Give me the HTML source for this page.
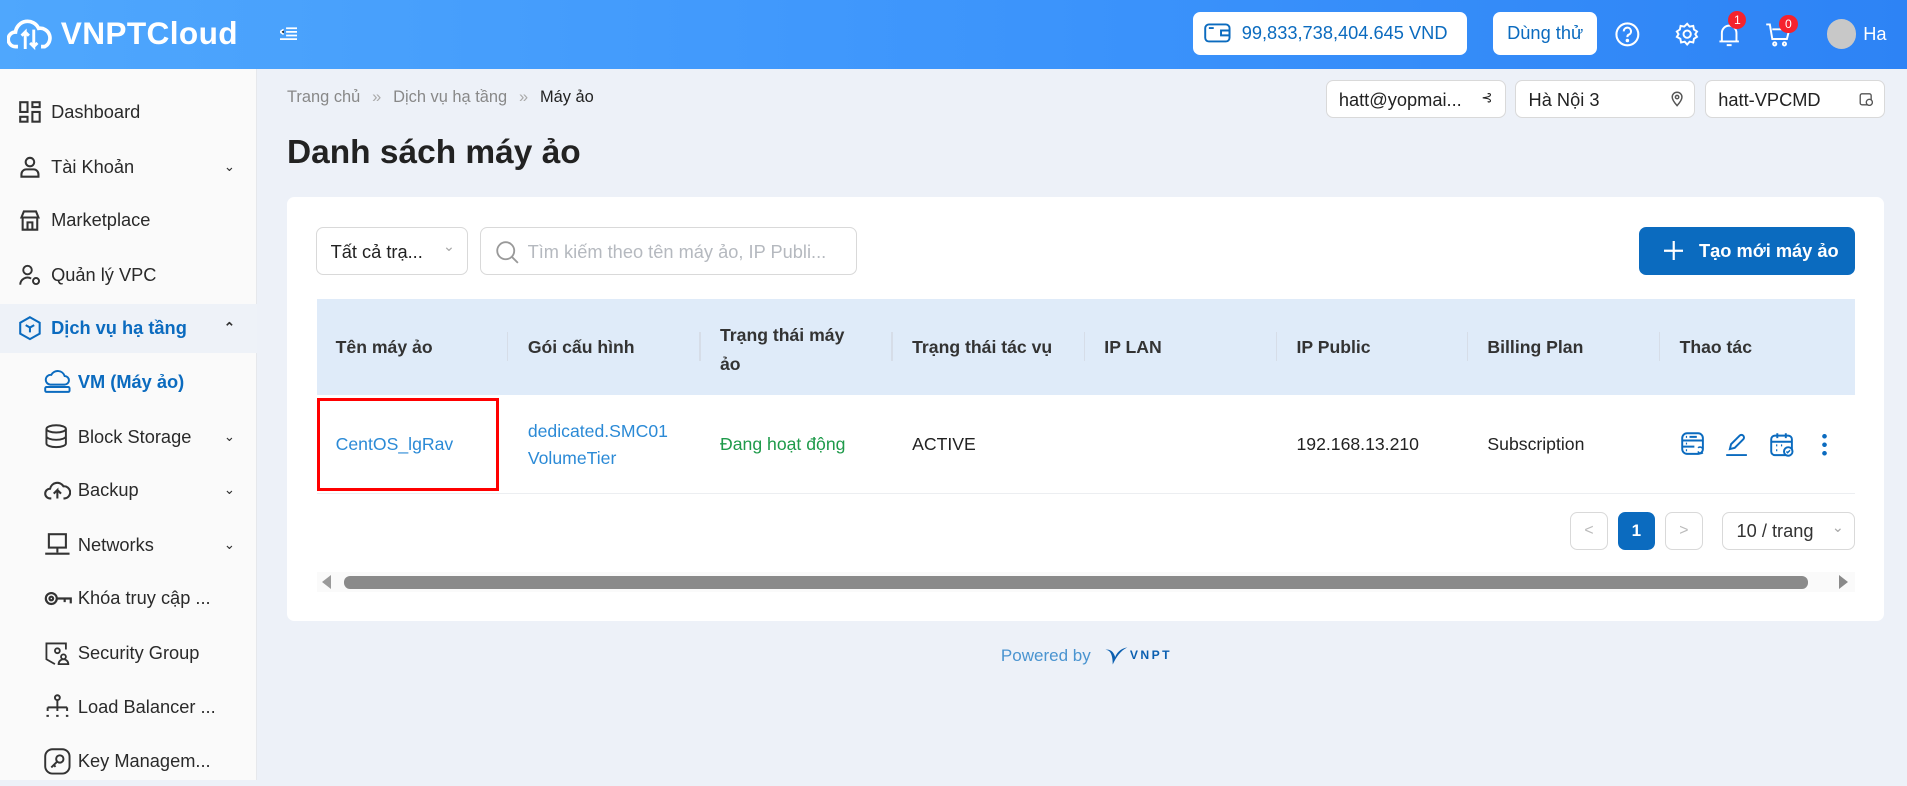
<!DOCTYPE html>
<html><head><meta charset="utf-8">
<style>
html{zoom:1.2162}
*{box-sizing:border-box;margin:0;padding:0}
body{width:1568px;height:641px;overflow:hidden;font-family:"Liberation Sans","Noto Sans CJK SC",sans-serif;background:#edf1f8;position:relative;color:#222}
.hdr{position:absolute;left:0;top:0;width:1568px;height:57px;background:linear-gradient(90deg,#4fa7fd,#3a92fb 60%,#2d83f5)}
.logo{position:absolute;left:6px;top:12px;color:#fff;font-size:26px;font-weight:bold;display:flex;align-items:center;gap:6px;letter-spacing:.3px}
.side{position:absolute;left:0;top:57px;width:211px;height:584px;background:#fafafa;border-right:1px solid #e6e8ec}
.it{position:absolute;left:0;width:211px;height:40px;display:flex;align-items:center;font-size:15px;color:#2a2a2a}
.it svg{position:absolute}
.it .t{position:absolute}
.chev{position:absolute;left:184px;font-size:11px;color:#333}
.abs{position:absolute}
.box{position:absolute;background:#fff;border:1px solid #d9d9d9;border-radius:6px}
.th{position:absolute;top:246px;font-size:14.5px;font-weight:bold;color:#333}
.sep{position:absolute;top:273px;width:1px;height:24px;background:#d6dde8}
.td{position:absolute;font-size:14.5px}
</style></head><body>
<div class="hdr">
 <div class="logo"><svg width="38" height="30" viewBox="0 0 38 30" fill="none" stroke="#fff" stroke-width="3"><path d="M9 26H7a6 6 0 0 1 0-12 10 10 0 0 1 19-3 8 8 0 0 1 5 15h-3"/><path d="M15 28V14l-3 3M15 14l3 3M22 12v14l-3-3M22 26l3-3" stroke-width="2.4"/></svg>VNPTCloud</div>
 <svg class="abs" style="left:230px;top:22px" width="14" height="12" stroke="#fff" stroke-width="1.4"><path d="M5 1h9M5 4h9M5 7h9M0 10h14M3 2L0 4l3 2"/></svg>
 <div class="abs" style="left:981px;top:10px;width:225px;height:35px;background:#fff;border-radius:6px;color:#0b6bbf;font-size:15px;display:flex;align-items:center;padding-left:9px;gap:9px;white-space:nowrap"><svg width="22" height="18" fill="none" stroke="#0b6bbf" stroke-width="1.6"><rect x="1" y="2" width="20" height="14" rx="3"/><path d="M4 5h4M14 7h7v4h-7z"/></svg>99,833,738,404.645 VND</div>
 <div class="abs" style="left:1228px;top:10px;width:85px;height:35px;background:#fff;border-radius:6px;color:#0b6bbf;font-size:15px;text-align:center;line-height:35px">Dùng thử</div>
 <svg class="abs" style="left:1327px;top:17px" width="22" height="22" fill="none" stroke="#fff" stroke-width="1.7"><circle cx="11" cy="11" r="9"/><path d="M8 8.5a3 3 0 1 1 4 2.8c-1 .4-1 1-1 2"/><circle cx="11" cy="16" r=".6" fill="#fff"/></svg>
 <svg class="abs" style="left:1377px;top:18px" width="20" height="20" fill="none" stroke="#fff" stroke-width="1.6"><circle cx="10" cy="10" r="3"/><path d="M10 1.5l2 2.3 3-.6.6 3 2.5 1.6-1.4 2.2 1.4 2.2-2.5 1.6-.6 3-3-.6-2 2.3-2-2.3-3 .6-.6-3L1.5 12.2 2.9 10 1.5 7.8 4 6.2l.6-3 3 .6z"/></svg>
 <svg class="abs" style="left:1412px;top:18px" width="20" height="22" fill="none" stroke="#fff" stroke-width="1.6"><path d="M4 16V9a6 6 0 0 1 12 0v7M2 16h16M8 19h4"/></svg>
 <div class="abs" style="left:1421px;top:9px;width:15px;height:15px;border-radius:50%;background:#f5222d;color:#fff;font-size:10px;text-align:center;line-height:15px">1</div>
 <svg class="abs" style="left:1451px;top:18px" width="22" height="22" fill="none" stroke="#fff" stroke-width="1.6"><path d="M1 2h3l2 12h12l2-8H6"/><circle cx="8" cy="18" r="1.3"/><circle cx="16" cy="18" r="1.3"/></svg>
 <div class="abs" style="left:1463px;top:12px;width:15px;height:15px;border-radius:50%;background:#f5222d;color:#fff;font-size:10px;text-align:center;line-height:15px">0</div>
 <div class="abs" style="left:1502px;top:16px;width:24px;height:24px;border-radius:50%;background:#c8c8c8"></div>
 <div class="abs" style="left:1532px;top:19px;color:#fff;font-size:15px">Ha</div>
</div>

<div class="side">
 <div class="it" style="top:15px"><svg style="left:16px" width="18" height="18" fill="none" stroke="#333" stroke-width="1.7"><rect x="1" y="1" width="6" height="8"/><rect x="11" y="1" width="6" height="4"/><rect x="1" y="13" width="6" height="4"/><rect x="11" y="9" width="6" height="8"/></svg><span class="t" style="left:42px">Dashboard</span></div>
 <div class="it" style="top:60px"><svg style="left:16px" width="18" height="18" fill="none" stroke="#333" stroke-width="1.7"><circle cx="9" cy="5" r="3.5"/><path d="M2 17v-2a4 4 0 0 1 4-4h6a4 4 0 0 1 4 4v2z"/></svg><span class="t" style="left:42px">Tài Khoản</span><span class="chev">&#8964;</span></div>
 <div class="it" style="top:104px"><svg style="left:16px" width="18" height="18" fill="none" stroke="#333" stroke-width="1.7"><path d="M2 7l2-5h10l2 5zM3 7v10h12V7M7 11h4v6H7z"/></svg><span class="t" style="left:42px">Marketplace</span></div>
 <div class="it" style="top:149px"><svg style="left:16px" width="18" height="18" fill="none" stroke="#333" stroke-width="1.6"><circle cx="7" cy="5" r="3.5"/><path d="M1 17a6 6 0 0 1 9-5"/><circle cx="14" cy="14" r="2.5"/></svg><span class="t" style="left:42px">Quản lý VPC</span></div>
 <div class="it" style="top:193px;background:#eef2f8;color:#0b6bbf;font-weight:bold"><svg style="left:16px" width="18" height="20" fill="none" stroke="#0b6bbf" stroke-width="1.7"><path d="M9 1l8 4.5v9L9 19l-8-4.5v-9z"/><path d="M5.5 7.5L9 9.5l3.5-2M9 9.5v4"/></svg><span class="t" style="left:42px">Dịch vụ hạ tầng</span><span class="chev" style="color:#333">&#8963;</span></div>
 <div class="it" style="top:237px;color:#0b6bbf;font-weight:bold"><svg style="left:36px" width="22" height="20" fill="none" stroke="#0b6bbf" stroke-width="1.6"><path d="M5 12a4 4 0 0 1 1-8 6 6 0 0 1 11 1 3.5 3.5 0 0 1 0 7z"/><rect x="1" y="14" width="20" height="4" rx="1"/></svg><span class="t" style="left:64px">VM (Máy ảo)</span></div>
 <div class="it" style="top:282px"><svg style="left:36px" width="20" height="20" fill="none" stroke="#333" stroke-width="1.6"><ellipse cx="10" cy="4" rx="8" ry="3"/><path d="M2 4v12c0 1.7 3.6 3 8 3s8-1.3 8-3V4M2 10c0 1.7 3.6 3 8 3s8-1.3 8-3"/></svg><span class="t" style="left:64px">Block Storage</span><span class="chev">&#8964;</span></div>
 <div class="it" style="top:326px"><svg style="left:36px" width="22" height="18" fill="none" stroke="#333" stroke-width="1.7"><path d="M6 16H5a4 4 0 0 1 0-8 6 6 0 0 1 11-2 4 4 0 0 1 1 10h-1M11 16V9l-3 3M11 9l3 3"/></svg><span class="t" style="left:64px">Backup</span><span class="chev">&#8964;</span></div>
 <div class="it" style="top:371px"><svg style="left:36px" width="22" height="20" fill="none" stroke="#333" stroke-width="1.7"><rect x="4" y="1" width="14" height="11"/><path d="M11 12v4M1 17h20"/></svg><span class="t" style="left:64px">Networks</span><span class="chev">&#8964;</span></div>
 <div class="it" style="top:415px"><svg style="left:36px" width="24" height="14" fill="none" stroke="#333" stroke-width="1.8"><circle cx="6" cy="7" r="4.5"/><circle cx="6" cy="7" r="1.5"/><path d="M10 7h12v4M17 7v3"/></svg><span class="t" style="left:64px">Khóa truy cập ...</span></div>
 <div class="it" style="top:460px"><svg style="left:36px" width="22" height="20" fill="none" stroke="#333" stroke-width="1.5"><path d="M9 19l-7-4V2h16v5"/><circle cx="11" cy="8" r="2"/><circle cx="16" cy="13" r="2"/><path d="M12 19a4 4 0 0 1 8 0z"/></svg><span class="t" style="left:64px">Security Group</span></div>
 <div class="it" style="top:504px"><svg style="left:36px" width="22" height="20" fill="none" stroke="#333" stroke-width="1.6"><circle cx="11" cy="3" r="2"/><path d="M11 5v6M3 11h16M3 11v3M11 11v3M19 11v3M2 18h2M10 18h2M18 18h2"/></svg><span class="t" style="left:64px">Load Balancer ...</span></div>
 <div class="it" style="top:549px"><svg style="left:36px" width="22" height="22" fill="none" stroke="#333" stroke-width="1.6"><rect x="1" y="1" width="20" height="20" rx="6"/><circle cx="13" cy="9" r="3"/><path d="M11 11l-5 5M8 14l1.5 1.5"/></svg><span class="t" style="left:64px">Key Managem...</span></div>
</div>

<div class="abs" style="left:236px;top:72px;font-size:13.5px;color:#888">Trang chủ <span style="margin:0 6px;color:#aaa">»</span> Dịch vụ hạ tầng <span style="margin:0 6px;color:#aaa">»</span> <span style="color:#222">Máy ảo</span></div>
<div class="box" style="left:1090px;top:66px;width:148px;height:31px;font-size:15px;padding:6px 10px">hatt@yopmai...<span class="abs" style="right:10px;top:7px;font-size:11px">⊰</span></div>
<div class="box" style="left:1246px;top:66px;width:148px;height:31px;font-size:15px;padding:6px 10px">Hà Nội 3<svg class="abs" style="right:9px;top:8px" width="10" height="13" fill="none" stroke="#555" stroke-width="1.2"><path d="M5 12S1 7.5 1 5a4 4 0 0 1 8 0c0 2.5-4 7-4 7z"/><circle cx="5" cy="5" r="1.4"/></svg></div>
<div class="box" style="left:1402px;top:66px;width:148px;height:31px;font-size:15px;padding:6px 10px">hatt-VPCMD<svg class="abs" style="right:9px;top:9px" width="12" height="12" fill="none" stroke="#555" stroke-width="1.1"><rect x="1" y="1.5" width="9" height="9" rx="1.5"/><circle cx="8.5" cy="8.5" r="2.5" fill="#fff"/></svg></div>
<div class="abs" style="left:236px;top:110px;font-size:27.5px;font-weight:bold;color:#222">Danh sách máy ảo</div>

<div class="abs" style="left:236px;top:162px;width:1313px;height:349px;background:#fff;border-radius:6px"></div>
<div class="box" style="left:260px;top:187px;width:125px;height:39px;font-size:15px;padding:10px 11px">Tất cả trạ...<span class="abs" style="right:10px;top:8px;color:#aaa;font-size:12px">&#8964;</span></div>
<div class="box" style="left:395px;top:187px;width:310px;height:39px;font-size:15px;padding:10px 0 0 38px;color:#b5b9bf">Tìm kiếm theo tên máy ảo, IP Publi...<svg class="abs" style="left:12px;top:10px" width="20" height="20" fill="none" stroke="#999" stroke-width="1.5"><circle cx="8" cy="8" r="7"/><path d="M13 13l5 5"/></svg></div>
<div class="abs" style="left:1348px;top:187px;width:177px;height:39px;background:#0b6bbf;border-radius:6px;color:#fff;font-size:15px;font-weight:bold;line-height:39px;padding-left:49px">Tạo mới máy ảo<svg class="abs" style="left:20px;top:11px" width="16" height="16" stroke="#fff" stroke-width="1.8"><path d="M8 0v16M0 8h16"/></svg></div>

<div class="abs" style="left:261px;top:246px;width:1264px;height:79px;background:#dfebf9"></div>
<div class="th" style="left:276px;top:277px">Tên máy ảo</div><div class="sep" style="left:417px"></div>
<div class="th" style="left:434px;top:277px">Gói cấu hình</div><div class="sep" style="left:575px"></div>
<div class="th" style="left:592px;top:264px;line-height:24px">Trạng thái máy<br>ảo</div><div class="sep" style="left:733px"></div>
<div class="th" style="left:750px;top:277px">Trạng thái tác vụ</div><div class="sep" style="left:891px"></div>
<div class="th" style="left:908px;top:277px">IP LAN</div><div class="sep" style="left:1049px"></div>
<div class="th" style="left:1066px;top:277px">IP Public</div><div class="sep" style="left:1206px"></div>
<div class="th" style="left:1223px;top:277px">Billing Plan</div><div class="sep" style="left:1364px"></div>
<div class="th" style="left:1381px;top:277px">Thao tác</div>
<div class="abs" style="left:261px;top:405px;width:1264px;height:1px;background:#eceef1"></div>
<div class="abs" style="left:261px;top:327px;width:149px;height:77px;border:3px solid #f00"></div>
<div class="td" style="left:276px;top:357px;color:#2b8ad6">CentOS_lgRav</div>
<div class="td" style="left:434px;top:344px;color:#2b8ad6;line-height:22px">dedicated.SMC01<br>VolumeTier</div>
<div class="td" style="left:592px;top:357px;color:#1e9a4a">Đang hoạt động</div>
<div class="td" style="left:750px;top:357px">ACTIVE</div>
<div class="td" style="left:1066px;top:357px">192.168.13.210</div>
<div class="td" style="left:1223px;top:357px">Subscription</div>
<svg class="abs" style="left:1382px;top:355px" width="20" height="20" fill="none" stroke="#0b6bbf" stroke-width="1.6"><rect x="1" y="1" width="17" height="17" rx="4"/><path d="M1 7h17M1 12h10M4 4h1M7 4h6M4 9.5h1M4 15h1"/><path d="M14 13a2.5 2.5 0 0 1 4 1M18 17a2.5 2.5 0 0 1-4-1" stroke-width="1.3"/></svg>
<svg class="abs" style="left:1418px;top:355px" width="20" height="20" fill="none" stroke="#0b6bbf" stroke-width="1.6"><path d="M4 14l1-4 7-7a2 2 0 0 1 3 3l-7 7zM1 19h17"/></svg>
<svg class="abs" style="left:1455px;top:355px" width="20" height="21" fill="none" stroke="#0b6bbf" stroke-width="1.6"><rect x="1" y="3" width="17" height="16" rx="3"/><path d="M1 8h17M6 1v4M13 1v4M5 11h1M9 11h1M5 15h1"/><circle cx="15" cy="16" r="3.5" fill="#fff"/><path d="M13.5 16l1 1 2-2" stroke-width="1.2"/></svg>
<div class="abs" style="left:1498px;top:355px;width:4px;height:20px;background:radial-gradient(circle,#0b6bbf 1.7px,transparent 2px) 0 0/4px 7px"></div>

<div class="box" style="left:1291px;top:421px;width:31px;height:31px;color:#bbb;text-align:center;line-height:29px;font-size:13px">&lt;</div>
<div class="abs" style="left:1330px;top:421px;width:31px;height:31px;background:#0b6bbf;border-radius:6px;color:#fff;text-align:center;line-height:31px;font-size:14px;font-weight:bold">1</div>
<div class="box" style="left:1369px;top:421px;width:31px;height:31px;color:#bbb;text-align:center;line-height:29px;font-size:13px">&gt;</div>
<div class="box" style="left:1416px;top:421px;width:109px;height:31px;font-size:15px;padding:6px 11px;color:#333">10 / trang<span class="abs" style="right:8px;top:5px;color:#aaa;font-size:12px">&#8964;</span></div>

<div class="abs" style="left:261px;top:470px;width:1264px;height:17px;background:#fafafa"></div>
<div class="abs" style="left:283px;top:474px;width:1204px;height:10px;background:#8a8a8a;border-radius:5px"></div>
<div class="abs" style="left:265px;top:473px;width:0;height:0;border-top:6px solid transparent;border-bottom:6px solid transparent;border-right:8px solid #9a9a9a"></div>
<div class="abs" style="left:1512px;top:473px;width:0;height:0;border-top:6px solid transparent;border-bottom:6px solid transparent;border-left:8px solid #8a8a8a"></div>

<div class="abs" style="left:823px;top:531px;font-size:14px;color:#4a94d0">Powered by</div>
<svg class="abs" style="left:907px;top:530px" width="22" height="20"><path d="M2 4c4 0 6 4 6 12 3-6 6-11 12-14-6 1-9 5-10 8C9 6 6 3 2 4z" fill="#0b5fb0"/></svg>
<div class="abs" style="left:929px;top:533px;font-size:10px;font-weight:bold;color:#0b5fb0;letter-spacing:2px">VNPT</div>
</body></html>
